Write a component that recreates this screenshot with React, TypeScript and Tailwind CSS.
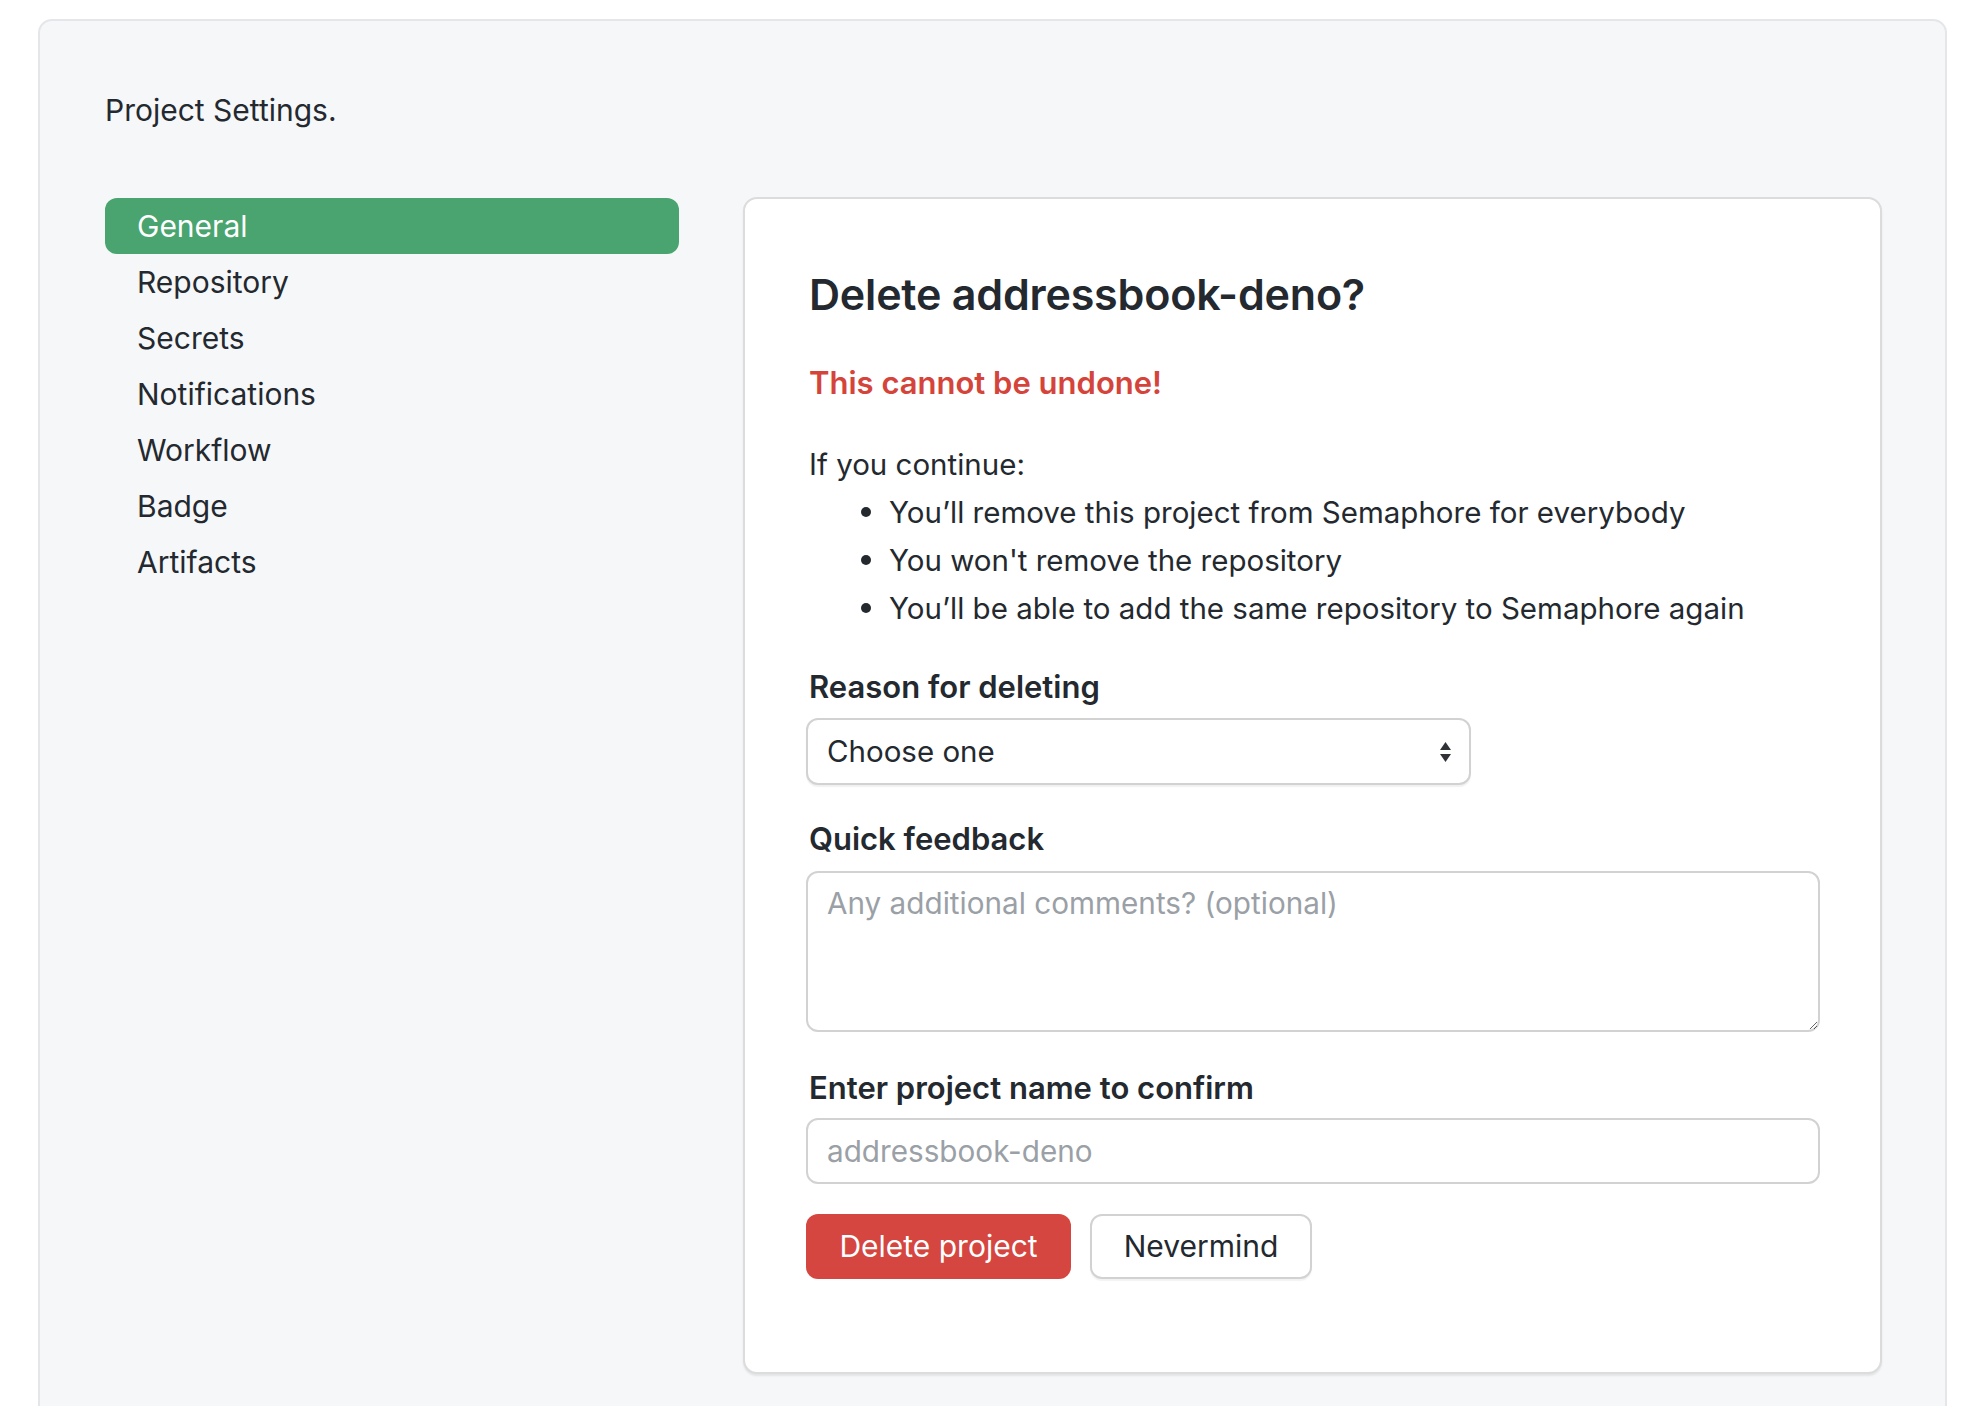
import React from "react";

const navItems = ["General", "Repository", "Secrets", "Notifications", "Workflow", "Badge", "Artifacts"];

function Bullet({ children }: { children: React.ReactNode }) {
  return (
    <li className="flex items-center h-[48px] pl-[52px]">
      <span className="w-[10px] h-[10px] rounded-full bg-[#23292f] mr-[18px] shrink-0" />
      <span>{children}</span>
    </li>
  );
}

export default function App() {
  return (
    <div
      className="min-h-screen bg-white text-[#23292f] overflow-hidden"
      style={{ fontFamily: "Inter, 'Liberation Sans', sans-serif" }}
    >
      <div className="ml-[38px] mt-[19px] w-[1909px] h-[1440px] border-2 border-[#e4e6e9] rounded-[14px] bg-[#f6f7f9] pt-[65px] pl-[65px] pr-[63px]">
        <div className="h-[48px] leading-[48px] text-[30px]">Project Settings.</div>
        <div className="flex gap-[64px] mt-[63px]">
          <nav className="w-[574px] shrink-0 flex flex-col mt-[1px]">
            {navItems.map((item, i) => (
              <div
                key={item}
                className={
                  i === 0
                    ? "h-[56px] flex items-center pl-[32px] rounded-[12px] bg-[#49a46f] text-white text-[30px]"
                    : "h-[56px] flex items-center pl-[32px] text-[30px]"
                }
              >
                {item}
              </div>
            ))}
          </nav>
          <div className="w-[1139px] shrink-0 bg-white border-2 border-[#dcdcdc] rounded-[14px] shadow-[0_2px_2px_rgba(0,0,0,0.08)] pl-[64px] pt-[67px] pb-[93px] text-[29.5px]">
            <h1 className="h-[56px] leading-[56px] text-[43px] font-semibold tracking-[-0.2px]">Delete addressbook-deno?</h1>
            <p className="mt-[37px] h-[48px] leading-[48px] font-semibold text-[31px] text-[#d5443b]">This cannot be undone!</p>
            <p className="mt-[33px] h-[48px] leading-[48px]">If you continue:</p>
            <ul>
              <Bullet>You’ll remove this project from Semaphore for everybody</Bullet>
              <Bullet>You won't remove the repository</Bullet>
              <Bullet>You’ll be able to add the same repository to Semaphore again</Bullet>
            </ul>
            <label className="block mt-[31px] h-[48px] leading-[48px] font-semibold text-[31px]">Reason for deleting</label>
            <div className="mt-[7px] -ml-[3px] w-[665px] h-[67px] border-2 border-[#d2d2d2] rounded-[12px] shadow-[0_2px_1px_rgba(0,0,0,0.06)] flex items-center justify-between pl-[19px] pr-[17px] bg-white">
              <span>Choose one</span>
              <svg width="13" height="22" viewBox="0 0 13 22">
                <path d="M6.5 1 L12 9 L1 9 Z" fill="#2f3338" />
                <path d="M1 13 L12 13 L6.5 21 Z" fill="#2f3338" />
              </svg>
            </div>
            <label className="block mt-[30px] h-[48px] leading-[48px] font-semibold text-[31px]">Quick feedback</label>
            <textarea
              className="block mt-[8px] -ml-[3px] w-[1014px] h-[161px] border-2 border-[#d2d2d2] rounded-[12px] pl-[19px] pt-[8px] leading-[44px] text-[29.7px] placeholder:text-[#9aa0a6] outline-none resize-y"
              placeholder="Any additional comments? (optional)"
            />
            <label className="block mt-[32px] h-[48px] leading-[48px] font-semibold text-[31px]">Enter project name to confirm</label>
            <input
              className="block mt-[6px] -ml-[3px] w-[1014px] h-[66px] border-2 border-[#d2d2d2] rounded-[12px] pl-[19px] text-[29.7px] placeholder:text-[#9aa0a6] outline-none"
              placeholder="addressbook-deno"
            />
            <div className="flex gap-[19px] mt-[30px] -ml-[3px]">
              <button className="w-[265px] h-[65px] rounded-[12px] bg-[#d4463f] text-white text-[30px]">Delete project</button>
              <button className="w-[222px] h-[65px] rounded-[12px] border-2 border-[#d2d2d2] bg-white text-[30px] text-[#23292f] shadow-[0_2px_1px_rgba(0,0,0,0.05)]">Nevermind</button>
            </div>
          </div>
        </div>
      </div>
    </div>
  );
}
